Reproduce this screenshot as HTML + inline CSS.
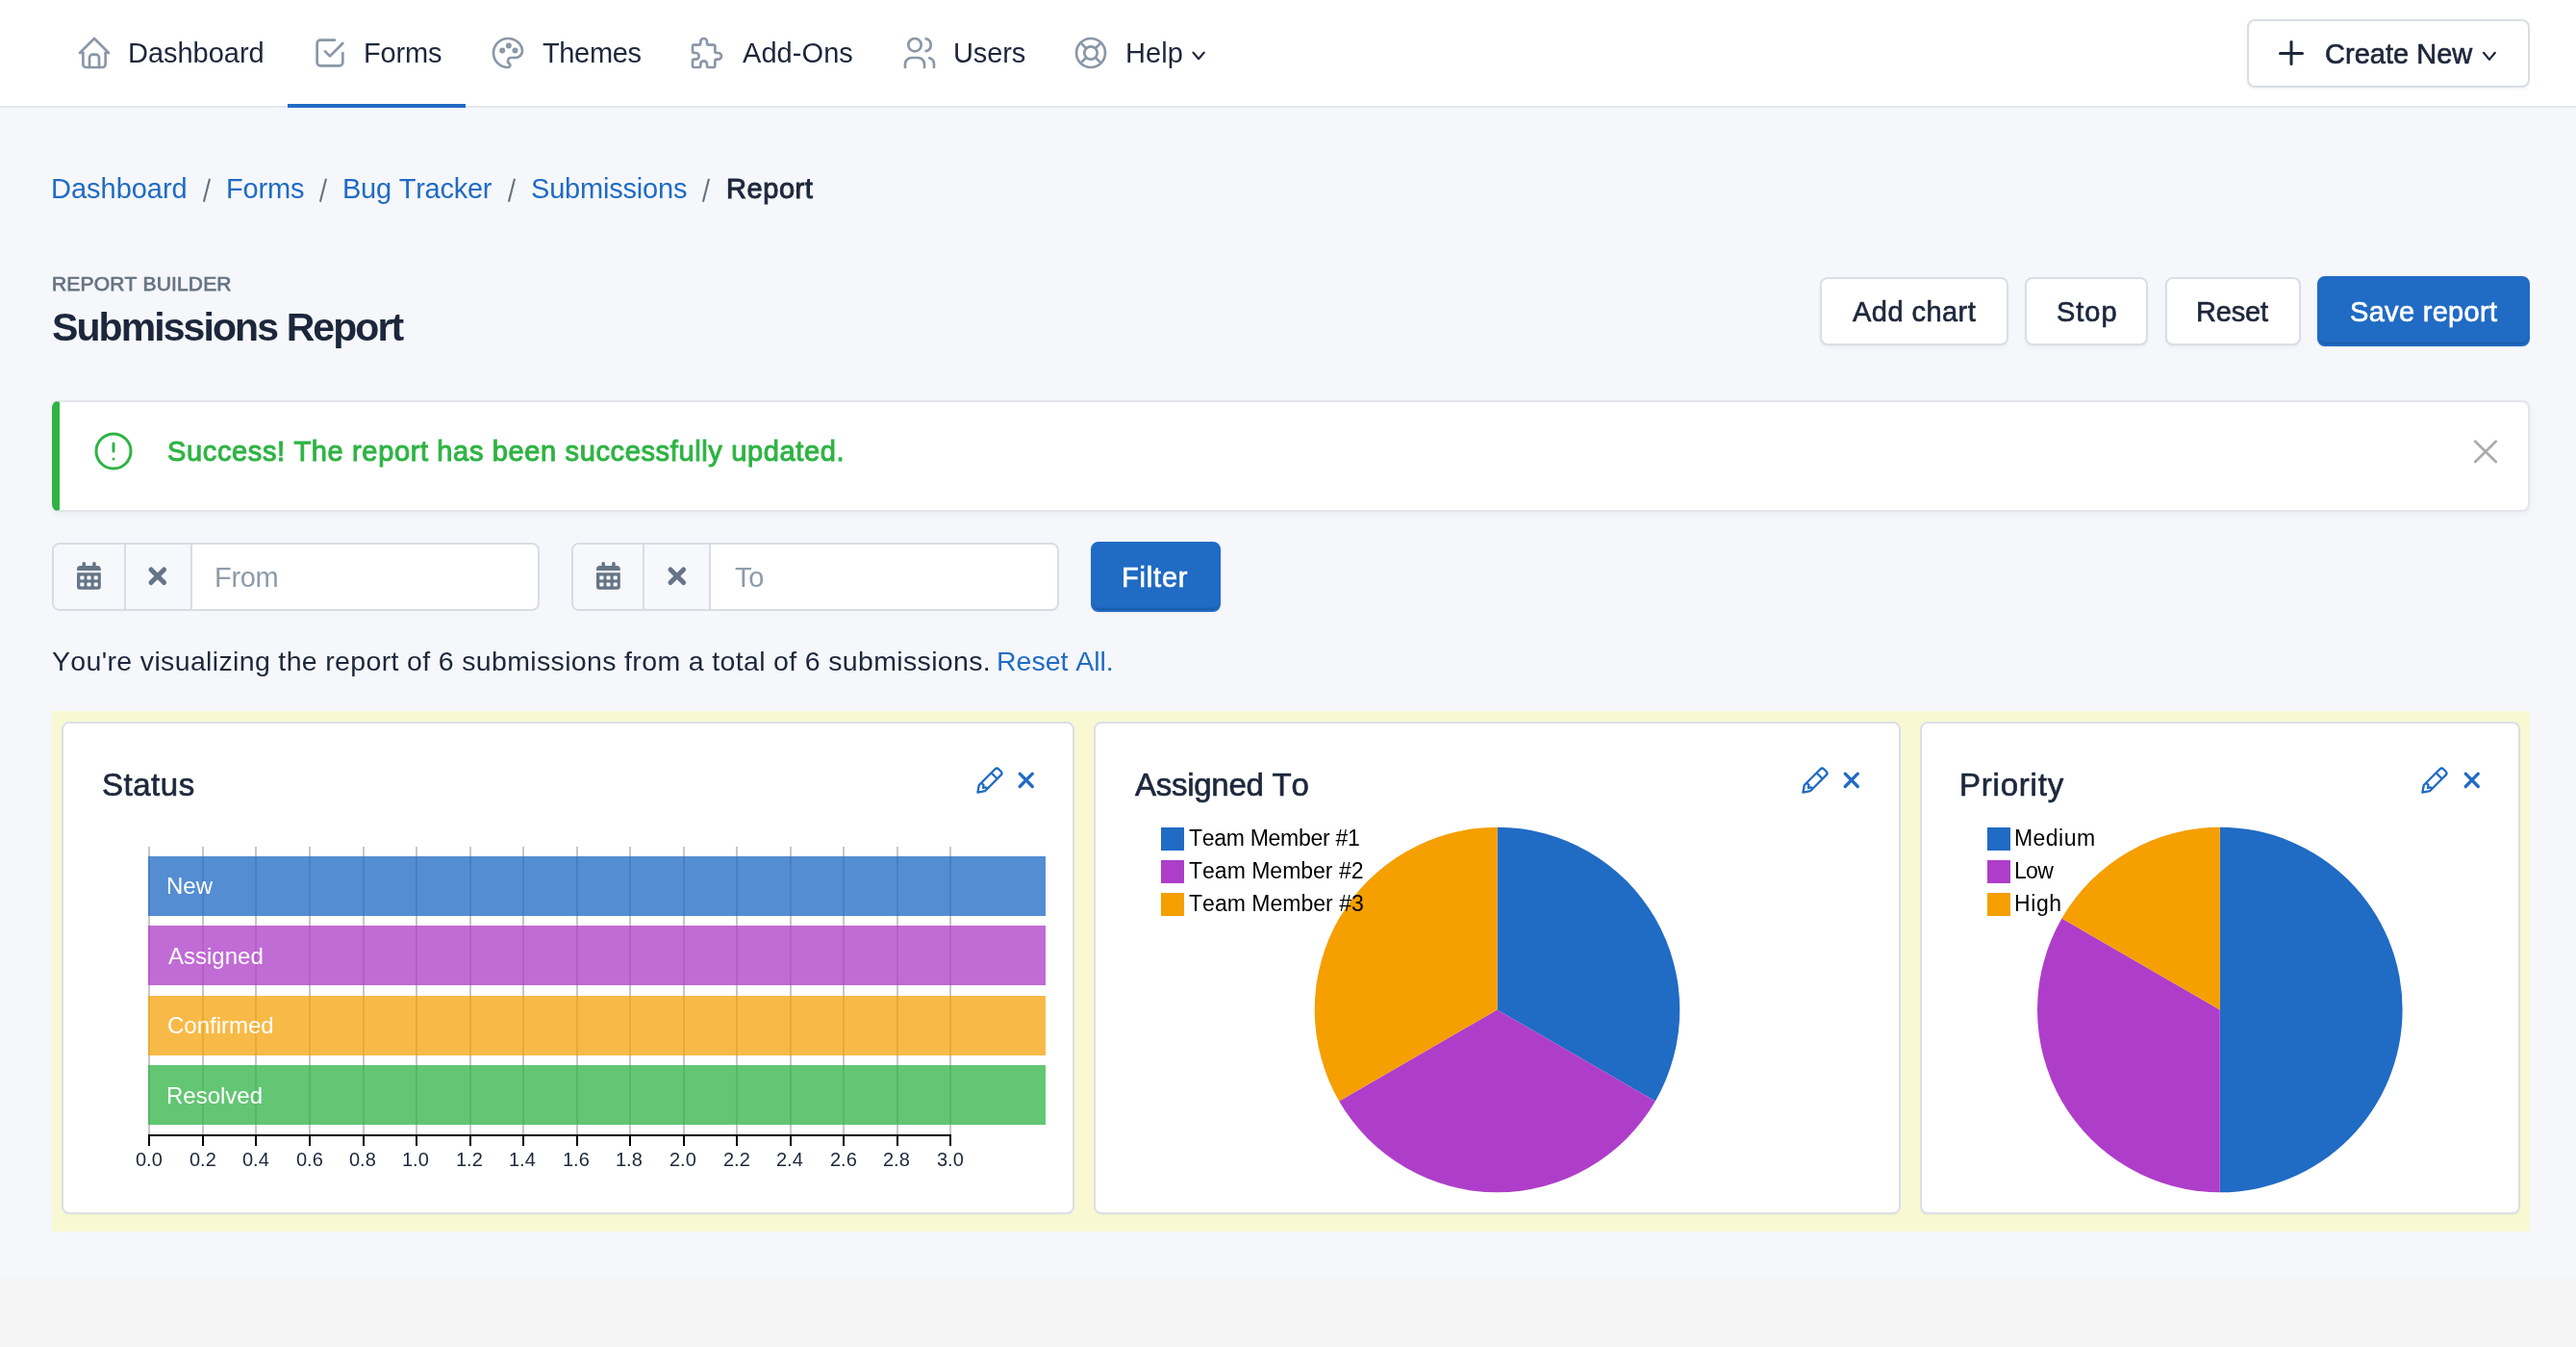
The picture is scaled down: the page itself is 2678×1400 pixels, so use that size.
<!DOCTYPE html>
<html><head><meta charset="utf-8"><title>Submissions Report</title>
<style>
html,body{margin:0;padding:0}
body{width:2678px;height:1400px;position:relative;overflow:hidden;background:#f4f5f4;font-family:"Liberation Sans",sans-serif;font-kerning:none}
.t{position:absolute;white-space:pre;line-height:60px;will-change:transform}
svg{overflow:visible}
@media (max-width:2000px){body{zoom:0.5}}
</style></head><body>
<div style="position:absolute;left:0px;top:0px;width:2678px;height:1329px;background:#f5f7fb"></div>
<div style="position:absolute;left:0px;top:0px;width:2678px;height:110px;background:#fff"></div>
<div style="position:absolute;left:0px;top:110px;width:2678px;height:2px;background:#e3e6ea"></div>
<div style="position:absolute;left:299px;top:108px;width:185px;height:4px;background:#206bc4"></div>
<svg style="position:absolute;left:78px;top:35px;" width="40" height="40" viewBox="0 0 24 24"><g fill="none" stroke="#8a97a7" stroke-width="1.6" stroke-linecap="round" stroke-linejoin="round"><path d="M5 12l-2 0l9 -9l9 9l-2 0"/><path d="M5 12v7a2 2 0 0 0 2 2h10a2 2 0 0 0 2 -2v-7"/><path d="M9 21v-6a2 2 0 0 1 2 -2h2a2 2 0 0 1 2 2v6"/></g></svg>
<svg style="position:absolute;left:323px;top:35px;" width="40" height="40" viewBox="0 0 24 24"><g fill="none" stroke="#8a97a7" stroke-width="1.6" stroke-linecap="round" stroke-linejoin="round"><path d="M9 11l3 3l8 -8"/><path d="M20 12v6a2 2 0 0 1 -2 2h-12a2 2 0 0 1 -2 -2v-12a2 2 0 0 1 2 -2h9"/></g></svg>
<svg style="position:absolute;left:508px;top:35px;" width="40" height="40" viewBox="0 0 24 24"><g fill="none" stroke="#8a97a7" stroke-width="1.6" stroke-linecap="round" stroke-linejoin="round"><path d="M12 21a9 9 0 0 1 0 -18c4.97 0 9 3.582 9 8c0 1.06 -.474 2.078 -1.318 2.828c-.844 .75 -1.989 1.172 -3.182 1.172h-2.5a2 2 0 0 0 -1 3.75a1.3 1.3 0 0 1 -1 2.25"/><path d="M8.5 10.5m-1 0a1 1 0 1 0 2 0a1 1 0 1 0 -2 0"/><path d="M12.5 7.5m-1 0a1 1 0 1 0 2 0a1 1 0 1 0 -2 0"/><path d="M16.5 10.5m-1 0a1 1 0 1 0 2 0a1 1 0 1 0 -2 0"/></g></svg>
<svg style="position:absolute;left:715px;top:35px;" width="40" height="40" viewBox="0 0 24 24"><g fill="none" stroke="#8a97a7" stroke-width="1.6" stroke-linecap="round" stroke-linejoin="round"><path d="M4 7h3a1 1 0 0 0 1 -1v-1a2 2 0 0 1 4 0v1a1 1 0 0 0 1 1h3a1 1 0 0 1 1 1v3a1 1 0 0 0 1 1h1a2 2 0 0 1 0 4h-1a1 1 0 0 0 -1 1v3a1 1 0 0 1 -1 1h-3a1 1 0 0 1 -1 -1v-1a2 2 0 0 0 -4 0v1a1 1 0 0 1 -1 1h-3a1 1 0 0 1 -1 -1v-3a1 1 0 0 1 1 -1h1a2 2 0 0 0 0 -4h-1a1 1 0 0 1 -1 -1v-3a1 1 0 0 1 1 -1"/></g></svg>
<svg style="position:absolute;left:936px;top:35px;" width="40" height="40" viewBox="0 0 24 24"><g fill="none" stroke="#8a97a7" stroke-width="1.6" stroke-linecap="round" stroke-linejoin="round"><path d="M9 7m-4 0a4 4 0 1 0 8 0a4 4 0 1 0 -8 0"/><path d="M3 21v-2a4 4 0 0 1 4 -4h4a4 4 0 0 1 4 4v2"/><path d="M16 3.13a4 4 0 0 1 0 7.75"/><path d="M21 21v-2a4 4 0 0 0 -3 -3.85"/></g></svg>
<svg style="position:absolute;left:1114px;top:35px;" width="40" height="40" viewBox="0 0 24 24"><g fill="none" stroke="#8a97a7" stroke-width="1.6" stroke-linecap="round" stroke-linejoin="round"><path d="M12 12m-4 0a4 4 0 1 0 8 0a4 4 0 1 0 -8 0"/><path d="M12 12m-9 0a9 9 0 1 0 18 0a9 9 0 1 0 -18 0"/><path d="M15 15l3.35 3.35"/><path d="M9 15l-3.35 3.35"/><path d="M5.65 5.65l3.35 3.35"/><path d="M18.35 5.65l-3.35 3.35"/></g></svg>
<div class="t" style="left:133.22px;top:25.45px;font-size:29px;color:#1d273b;letter-spacing:-0.028px;">Dashboard</div>
<div class="t" style="left:378.22px;top:25.45px;font-size:29px;color:#1d273b;letter-spacing:-0.158px;">Forms</div>
<div class="t" style="left:564.35px;top:25.45px;font-size:29px;color:#1d273b;letter-spacing:-0.362px;">Themes</div>
<div class="t" style="left:772.44px;top:25.45px;font-size:29px;color:#1d273b;letter-spacing:0.069px;">Add-Ons</div>
<div class="t" style="left:990.76px;top:25.45px;font-size:29px;color:#1d273b;letter-spacing:-0.111px;">Users</div>
<div class="t" style="left:1170.12px;top:25.45px;font-size:29px;color:#1d273b;letter-spacing:0.068px;">Help</div>
<svg style="position:absolute;left:1230px;top:45px;" width="30" height="25" viewBox="0 0 30 25"><polyline points="10.5,9.6 16.1,16.2 21.7,9.6" fill="none" stroke="#1d273b" stroke-width="2.2" stroke-linecap="round" stroke-linejoin="round"/></svg>
<div style="position:absolute;left:2336px;top:20px;width:294px;height:71px;box-sizing:border-box;background:#fff;border:2px solid #d9dee4;border-radius:8px;box-shadow:0 2px 3px rgba(29,39,59,0.05)"></div>
<svg style="position:absolute;left:2362px;top:35px;" width="40" height="40" viewBox="0 0 40 40"><g fill="none" stroke="#1d273b" stroke-width="3" stroke-linecap="round"><path d="M20 8.5v23"/><path d="M8.5 20.4h23"/></g></svg>
<div class="t" style="left:2417.28px;top:25.55px;font-size:29px;color:#1d273b;letter-spacing:0.021px;-webkit-text-stroke:0.65px currentColor;">Create New</div>
<svg style="position:absolute;left:2570px;top:45px;" width="30" height="25" viewBox="0 0 30 25"><polyline points="12,9.8 17.9,16.9 23.8,9.8" fill="none" stroke="#1d273b" stroke-width="2.2" stroke-linecap="round" stroke-linejoin="round"/></svg>
<div class="t" style="left:52.87px;top:165.55px;font-size:29px;color:#206bc4;letter-spacing:-0.015px;">Dashboard</div>
<svg style="position:absolute;left:209.25px;top:183px;" width="12" height="30" viewBox="0 0 12 30"><path d="M9.00 2.8L2.90 26.8" stroke="#66727f" stroke-width="2.1" stroke-linecap="butt"/></svg>
<div class="t" style="left:234.52px;top:165.55px;font-size:29px;color:#206bc4;letter-spacing:-0.158px;">Forms</div>
<svg style="position:absolute;left:330.0px;top:183px;" width="12" height="30" viewBox="0 0 12 30"><path d="M9.00 2.8L2.90 26.8" stroke="#66727f" stroke-width="2.1" stroke-linecap="butt"/></svg>
<div class="t" style="left:355.62px;top:165.55px;font-size:29px;color:#206bc4;letter-spacing:-0.248px;">Bug Tracker</div>
<svg style="position:absolute;left:525.5px;top:183px;" width="12" height="30" viewBox="0 0 12 30"><path d="M9.00 2.8L2.90 26.8" stroke="#66727f" stroke-width="2.1" stroke-linecap="butt"/></svg>
<div class="t" style="left:551.68px;top:165.55px;font-size:29px;color:#206bc4;letter-spacing:-0.193px;">Submissions</div>
<svg style="position:absolute;left:728.0px;top:183px;" width="12" height="30" viewBox="0 0 12 30"><path d="M9.00 2.8L2.90 26.8" stroke="#66727f" stroke-width="2.1" stroke-linecap="butt"/></svg>
<div class="t" style="left:754.92px;top:165.55px;font-size:29px;color:#1d273b;letter-spacing:0.570px;-webkit-text-stroke:1px currentColor;">Report</div>
<div class="t" style="left:54.18px;top:265.42px;font-size:21px;color:#667382;letter-spacing:0.164px;-webkit-text-stroke:0.75px currentColor;">REPORT BUILDER</div>
<div class="t" style="left:54.32px;top:310.29px;font-size:41px;color:#1d273b;font-weight:700;letter-spacing:-1.911px;">Submissions Report</div>
<div style="position:absolute;left:1892px;top:288px;width:196px;height:71px;box-sizing:border-box;background:#fff;border:2px solid #d9dee4;border-radius:8px;box-shadow:0 2px 3px rgba(29,39,59,0.05)"></div>
<div style="position:absolute;left:2105px;top:288px;width:128px;height:71px;box-sizing:border-box;background:#fff;border:2px solid #d9dee4;border-radius:8px;box-shadow:0 2px 3px rgba(29,39,59,0.05)"></div>
<div style="position:absolute;left:2251px;top:288px;width:141px;height:71px;box-sizing:border-box;background:#fff;border:2px solid #d9dee4;border-radius:8px;box-shadow:0 2px 3px rgba(29,39,59,0.05)"></div>
<div style="position:absolute;left:2409px;top:287px;width:221px;height:72.5px;box-sizing:border-box;background:#206bc4;border:2px solid #206bc4;border-radius:8px;box-shadow:inset 0 -3px 2px -1px rgba(0,0,0,0.14),0 1px 2px rgba(29,39,59,0.06)"></div>
<div class="t" style="left:1925.54px;top:293.70px;font-size:29px;color:#1d273b;letter-spacing:0.455px;-webkit-text-stroke:0.65px currentColor;">Add chart</div>
<div class="t" style="left:2138.08px;top:293.70px;font-size:29px;color:#1d273b;letter-spacing:0.959px;-webkit-text-stroke:0.65px currentColor;">Stop</div>
<div class="t" style="left:2283.22px;top:293.70px;font-size:29px;color:#1d273b;letter-spacing:-0.166px;-webkit-text-stroke:0.65px currentColor;">Reset</div>
<div class="t" style="left:2442.68px;top:293.70px;font-size:29px;color:#fff;letter-spacing:0.302px;-webkit-text-stroke:0.65px currentColor;">Save report</div>
<div style="position:absolute;left:54px;top:416px;width:2576px;height:116px;box-sizing:border-box;background:#fff;border:2px solid #e2e5e9;border-left:8px solid #2fb344;border-radius:8px;box-shadow:0 2px 6px rgba(29,39,59,0.05)"></div>
<svg style="position:absolute;left:94px;top:445px;" width="48" height="48" viewBox="0 0 24 24"><g fill="none" stroke="#2fb344" stroke-width="1.5" stroke-linecap="round"><circle cx="12" cy="12" r="9"/><path d="M12 8v4"/><path d="M12 16h.01"/></g></svg>
<div class="t" style="left:174.08px;top:439.35px;font-size:29px;color:#2fb344;letter-spacing:0.640px;-webkit-text-stroke:1px currentColor;">Success! The report has been successfully updated.</div>
<svg style="position:absolute;left:2566px;top:452px;" width="36" height="36" viewBox="0 0 36 36"><g stroke="#ababab" stroke-width="2.7" stroke-linecap="round"><path d="M7.2 6.7L28.8 28"/><path d="M28.8 6.7L7.2 28"/></g></svg>
<div style="position:absolute;left:54px;top:564px;width:507px;height:71px;box-sizing:border-box;background:#fff;border:2px solid #d8dde3;border-radius:8px;overflow:hidden"></div>
<div style="position:absolute;left:56px;top:566px;width:142px;height:67px;background:#f6f8fb;border-radius:6px 0 0 6px"></div>
<div style="position:absolute;left:129px;top:566px;width:2px;height:67px;background:#d8dde3"></div>
<div style="position:absolute;left:198px;top:566px;width:2px;height:67px;background:#d8dde3"></div>
<svg style="position:absolute;left:79.75px;top:584.4px;" width="25" height="29" viewBox="0 0 25 29"><g fill="#667587"><rect x="5.5" y="0" width="3.5" height="6" rx="1.5"/><rect x="16.2" y="0" width="3.5" height="6" rx="1.5"/><path d="M0 7.5a3.5 3.5 0 0 1 3.5 -3.5h17.8a3.5 3.5 0 0 1 3.5 3.5v1.6h-24.8z"/><path d="M0 11.2h24.8v14.6a3 3 0 0 1 -3 3h-18.8a3 3 0 0 1 -3 -3z"/></g><g fill="#f6f8fb"><rect x="3.3" y="14.6" width="4.2" height="3.8" rx="1"/><rect x="3.3" y="21.6" width="4.2" height="3.8" rx="1"/><rect x="10.4" y="14.6" width="4.2" height="3.8" rx="1"/><rect x="10.4" y="21.6" width="4.2" height="3.8" rx="1"/><rect x="17.6" y="14.6" width="4.2" height="3.8" rx="1"/><rect x="17.6" y="21.6" width="4.2" height="3.8" rx="1"/></g></svg>
<svg style="position:absolute;left:154.20000000000002px;top:589px;" width="20" height="20" viewBox="0 0 20 20"><g stroke="#667587" stroke-width="5" stroke-linecap="round"><path d="M3 3L16.6 16.6"/><path d="M16.6 3L3 16.6"/></g></svg>
<div class="t" style="left:223.22px;top:569.55px;font-size:29px;color:#8f9bab;letter-spacing:-0.322px;">From</div>
<div style="position:absolute;left:594px;top:564px;width:507px;height:71px;box-sizing:border-box;background:#fff;border:2px solid #d8dde3;border-radius:8px;overflow:hidden"></div>
<div style="position:absolute;left:596px;top:566px;width:141px;height:67px;background:#f6f8fb;border-radius:6px 0 0 6px"></div>
<div style="position:absolute;left:668px;top:566px;width:2px;height:67px;background:#d8dde3"></div>
<div style="position:absolute;left:737px;top:566px;width:2px;height:67px;background:#d8dde3"></div>
<svg style="position:absolute;left:619.75px;top:584.4px;" width="25" height="29" viewBox="0 0 25 29"><g fill="#667587"><rect x="5.5" y="0" width="3.5" height="6" rx="1.5"/><rect x="16.2" y="0" width="3.5" height="6" rx="1.5"/><path d="M0 7.5a3.5 3.5 0 0 1 3.5 -3.5h17.8a3.5 3.5 0 0 1 3.5 3.5v1.6h-24.8z"/><path d="M0 11.2h24.8v14.6a3 3 0 0 1 -3 3h-18.8a3 3 0 0 1 -3 -3z"/></g><g fill="#f6f8fb"><rect x="3.3" y="14.6" width="4.2" height="3.8" rx="1"/><rect x="3.3" y="21.6" width="4.2" height="3.8" rx="1"/><rect x="10.4" y="14.6" width="4.2" height="3.8" rx="1"/><rect x="10.4" y="21.6" width="4.2" height="3.8" rx="1"/><rect x="17.6" y="14.6" width="4.2" height="3.8" rx="1"/><rect x="17.6" y="21.6" width="4.2" height="3.8" rx="1"/></g></svg>
<svg style="position:absolute;left:694.1999999999999px;top:589px;" width="20" height="20" viewBox="0 0 20 20"><g stroke="#667587" stroke-width="5" stroke-linecap="round"><path d="M3 3L16.6 16.6"/><path d="M16.6 3L3 16.6"/></g></svg>
<div class="t" style="left:763.75px;top:569.55px;font-size:29px;color:#8f9bab;letter-spacing:-3.374px;">To</div>
<div style="position:absolute;left:1134px;top:563px;width:135px;height:72.5px;box-sizing:border-box;background:#206bc4;border:2px solid #206bc4;border-radius:8px;box-shadow:inset 0 -3px 2px -1px rgba(0,0,0,0.14),0 1px 2px rgba(29,39,59,0.06)"></div>
<div class="t" style="left:1166.37px;top:569.95px;font-size:29px;color:#fff;letter-spacing:0.813px;-webkit-text-stroke:0.65px currentColor;">Filter</div>
<div class="t" style="left:54.37px;top:657.37px;font-size:28.5px;color:#1d273b;letter-spacing:0.345px;">You're visualizing the report of 6 submissions from a total of 6 submissions.</div>
<div class="t" style="left:1036.41px;top:657.37px;font-size:28.5px;color:#206bc4;letter-spacing:-0.019px;">Reset All.</div>
<div style="position:absolute;left:54px;top:739px;width:2576px;height:541px;background:#f8f9d3"></div>
<div style="position:absolute;left:64px;top:750px;width:1053px;height:512px;box-sizing:border-box;background:#fff;border:2px solid #dcdfe5;border-radius:8px;box-shadow:0 1px 2px rgba(29,39,59,0.04)"></div>
<div style="position:absolute;left:1137px;top:750px;width:839px;height:512px;box-sizing:border-box;background:#fff;border:2px solid #dcdfe5;border-radius:8px;box-shadow:0 1px 2px rgba(29,39,59,0.04)"></div>
<div style="position:absolute;left:1996px;top:750px;width:624px;height:512px;box-sizing:border-box;background:#fff;border:2px solid #dcdfe5;border-radius:8px;box-shadow:0 1px 2px rgba(29,39,59,0.04)"></div>
<div class="t" style="left:106.00px;top:786.36px;font-size:33px;color:#1d273b;letter-spacing:0.527px;-webkit-text-stroke:0.65px currentColor;">Status</div>
<div class="t" style="left:1179.94px;top:785.96px;font-size:33px;color:#1d273b;letter-spacing:-0.268px;-webkit-text-stroke:0.65px currentColor;">Assigned To</div>
<div class="t" style="left:2036.79px;top:786.06px;font-size:33px;color:#1d273b;letter-spacing:0.785px;-webkit-text-stroke:0.65px currentColor;">Priority</div>
<svg style="position:absolute;left:1013.5999999999999px;top:797.8px;" width="28" height="28" viewBox="0 0 28 28"><g transform="translate(1.8 26.2) rotate(-45)" fill="none" stroke="#206bc4" stroke-width="2.3" stroke-linejoin="round"><path d="M0.9 0 L7.2 -4.4 H30.6 Q33.4 -4.4 33.4 -1.6 V1.6 Q33.4 4.4 30.6 4.4 H7.2 Z"/><path d="M25.2 -4.4V4.4"/><path d="M10.6 -4.4V-1.2L8.2 0.6L10.6 2.4V4.4"/></g></svg>
<svg style="position:absolute;left:1057.9px;top:802px;" width="17.5" height="17.8" viewBox="0 0 17.5 17.8"><g stroke="#206bc4" stroke-width="3.3" stroke-linecap="round"><path d="M2.2 2.2L15.3 15.5"/><path d="M15.3 2.2L2.2 15.5"/></g></svg>
<svg style="position:absolute;left:1871.8999999999999px;top:797.8px;" width="28" height="28" viewBox="0 0 28 28"><g transform="translate(1.8 26.2) rotate(-45)" fill="none" stroke="#206bc4" stroke-width="2.3" stroke-linejoin="round"><path d="M0.9 0 L7.2 -4.4 H30.6 Q33.4 -4.4 33.4 -1.6 V1.6 Q33.4 4.4 30.6 4.4 H7.2 Z"/><path d="M25.2 -4.4V4.4"/><path d="M10.6 -4.4V-1.2L8.2 0.6L10.6 2.4V4.4"/></g></svg>
<svg style="position:absolute;left:1915.9px;top:802px;" width="17.5" height="17.8" viewBox="0 0 17.5 17.8"><g stroke="#206bc4" stroke-width="3.3" stroke-linecap="round"><path d="M2.2 2.2L15.3 15.5"/><path d="M15.3 2.2L2.2 15.5"/></g></svg>
<svg style="position:absolute;left:2516.3px;top:797.8px;" width="28" height="28" viewBox="0 0 28 28"><g transform="translate(1.8 26.2) rotate(-45)" fill="none" stroke="#206bc4" stroke-width="2.3" stroke-linejoin="round"><path d="M0.9 0 L7.2 -4.4 H30.6 Q33.4 -4.4 33.4 -1.6 V1.6 Q33.4 4.4 30.6 4.4 H7.2 Z"/><path d="M25.2 -4.4V4.4"/><path d="M10.6 -4.4V-1.2L8.2 0.6L10.6 2.4V4.4"/></g></svg>
<svg style="position:absolute;left:2560.5px;top:802px;" width="17.5" height="17.8" viewBox="0 0 17.5 17.8"><g stroke="#206bc4" stroke-width="3.3" stroke-linecap="round"><path d="M2.2 2.2L15.3 15.5"/><path d="M15.3 2.2L2.2 15.5"/></g></svg>
<div style="position:absolute;left:154.4px;top:879.5px;width:2px;height:300.5px;background:rgba(0,0,0,0.22)"></div>
<div style="position:absolute;left:154.4px;top:1180px;width:2px;height:11px;background:#000"></div>
<div class="t" style="left:141.00px;top:1174.97px;font-size:20px;color:#1d273b;">0.0</div>
<div style="position:absolute;left:209.93px;top:879.5px;width:2px;height:300.5px;background:rgba(0,0,0,0.22)"></div>
<div style="position:absolute;left:209.93px;top:1180px;width:2px;height:11px;background:#000"></div>
<div class="t" style="left:196.64px;top:1174.97px;font-size:20px;color:#1d273b;">0.2</div>
<div style="position:absolute;left:265.47px;top:879.5px;width:2px;height:300.5px;background:rgba(0,0,0,0.22)"></div>
<div style="position:absolute;left:265.47px;top:1180px;width:2px;height:11px;background:#000"></div>
<div class="t" style="left:251.97px;top:1174.97px;font-size:20px;color:#1d273b;">0.4</div>
<div style="position:absolute;left:321.0px;top:879.5px;width:2px;height:300.5px;background:rgba(0,0,0,0.22)"></div>
<div style="position:absolute;left:321.0px;top:1180px;width:2px;height:11px;background:#000"></div>
<div class="t" style="left:307.65px;top:1174.97px;font-size:20px;color:#1d273b;">0.6</div>
<div style="position:absolute;left:376.53px;top:879.5px;width:2px;height:300.5px;background:rgba(0,0,0,0.22)"></div>
<div style="position:absolute;left:376.53px;top:1180px;width:2px;height:11px;background:#000"></div>
<div class="t" style="left:363.17px;top:1174.97px;font-size:20px;color:#1d273b;">0.8</div>
<div style="position:absolute;left:432.07px;top:879.5px;width:2px;height:300.5px;background:rgba(0,0,0,0.22)"></div>
<div style="position:absolute;left:432.07px;top:1180px;width:2px;height:11px;background:#000"></div>
<div class="t" style="left:418.29px;top:1174.97px;font-size:20px;color:#1d273b;">1.0</div>
<div style="position:absolute;left:487.6px;top:879.5px;width:2px;height:300.5px;background:rgba(0,0,0,0.22)"></div>
<div style="position:absolute;left:487.6px;top:1180px;width:2px;height:11px;background:#000"></div>
<div class="t" style="left:473.94px;top:1174.97px;font-size:20px;color:#1d273b;">1.2</div>
<div style="position:absolute;left:543.13px;top:879.5px;width:2px;height:300.5px;background:rgba(0,0,0,0.22)"></div>
<div style="position:absolute;left:543.13px;top:1180px;width:2px;height:11px;background:#000"></div>
<div class="t" style="left:529.26px;top:1174.97px;font-size:20px;color:#1d273b;">1.4</div>
<div style="position:absolute;left:598.66px;top:879.5px;width:2px;height:300.5px;background:rgba(0,0,0,0.22)"></div>
<div style="position:absolute;left:598.66px;top:1180px;width:2px;height:11px;background:#000"></div>
<div class="t" style="left:584.94px;top:1174.97px;font-size:20px;color:#1d273b;">1.6</div>
<div style="position:absolute;left:654.2px;top:879.5px;width:2px;height:300.5px;background:rgba(0,0,0,0.22)"></div>
<div style="position:absolute;left:654.2px;top:1180px;width:2px;height:11px;background:#000"></div>
<div class="t" style="left:640.47px;top:1174.97px;font-size:20px;color:#1d273b;">1.8</div>
<div style="position:absolute;left:709.73px;top:879.5px;width:2px;height:300.5px;background:rgba(0,0,0,0.22)"></div>
<div style="position:absolute;left:709.73px;top:1180px;width:2px;height:11px;background:#000"></div>
<div class="t" style="left:696.22px;top:1174.97px;font-size:20px;color:#1d273b;">2.0</div>
<div style="position:absolute;left:765.26px;top:879.5px;width:2px;height:300.5px;background:rgba(0,0,0,0.22)"></div>
<div style="position:absolute;left:765.26px;top:1180px;width:2px;height:11px;background:#000"></div>
<div class="t" style="left:751.86px;top:1174.97px;font-size:20px;color:#1d273b;">2.2</div>
<div style="position:absolute;left:820.8px;top:879.5px;width:2px;height:300.5px;background:rgba(0,0,0,0.22)"></div>
<div style="position:absolute;left:820.8px;top:1180px;width:2px;height:11px;background:#000"></div>
<div class="t" style="left:807.18px;top:1174.97px;font-size:20px;color:#1d273b;">2.4</div>
<div style="position:absolute;left:876.33px;top:879.5px;width:2px;height:300.5px;background:rgba(0,0,0,0.22)"></div>
<div style="position:absolute;left:876.33px;top:1180px;width:2px;height:11px;background:#000"></div>
<div class="t" style="left:862.86px;top:1174.97px;font-size:20px;color:#1d273b;">2.6</div>
<div style="position:absolute;left:931.86px;top:879.5px;width:2px;height:300.5px;background:rgba(0,0,0,0.22)"></div>
<div style="position:absolute;left:931.86px;top:1180px;width:2px;height:11px;background:#000"></div>
<div class="t" style="left:918.39px;top:1174.97px;font-size:20px;color:#1d273b;">2.8</div>
<div style="position:absolute;left:987.39px;top:879.5px;width:2px;height:300.5px;background:rgba(0,0,0,0.22)"></div>
<div style="position:absolute;left:987.39px;top:1180px;width:2px;height:11px;background:#000"></div>
<div class="t" style="left:974.00px;top:1174.97px;font-size:20px;color:#1d273b;">3.0</div>
<div style="position:absolute;left:154px;top:890px;width:933px;height:62px;background:rgba(32,107,196,0.77)"></div>
<div style="position:absolute;left:154px;top:962px;width:933px;height:62px;background:rgba(174,62,201,0.77)"></div>
<div style="position:absolute;left:154px;top:1034.5px;width:933px;height:62px;background:rgba(245,159,0,0.72)"></div>
<div style="position:absolute;left:154px;top:1107px;width:933px;height:62px;background:rgba(47,179,68,0.75)"></div>
<div style="position:absolute;left:154px;top:1179px;width:834.895px;height:2px;background:#000"></div>
<div class="t" style="left:173.23px;top:891.28px;font-size:24px;color:#fff;">New</div>
<div class="t" style="left:175.15px;top:963.78px;font-size:24px;color:#fff;">Assigned</div>
<div class="t" style="left:173.98px;top:1036.28px;font-size:24px;color:#fff;">Confirmed</div>
<div class="t" style="left:173.23px;top:1108.78px;font-size:24px;color:#fff;">Resolved</div>
<svg style="position:absolute;left:0px;top:0px;pointer-events:none" width="2678" height="1400" viewBox="0 0 2678 1400"><path d="M1556.5 1049.5L1556.50 859.70A189.8 189.8 0 0 1 1720.87 1144.40Z" fill="#206bc4"/><path d="M1556.5 1049.5L1720.87 1144.40A189.8 189.8 0 0 1 1392.13 1144.40Z" fill="#ae3ec9"/><path d="M1556.5 1049.5L1392.13 1144.40A189.8 189.8 0 0 1 1556.50 859.70Z" fill="#f59f00"/></svg>
<svg style="position:absolute;left:0px;top:0px;pointer-events:none" width="2678" height="1400" viewBox="0 0 2678 1400"><path d="M2307.8 1049.5L2307.80 859.70A189.8 189.8 0 0 1 2307.80 1239.30Z" fill="#206bc4"/><path d="M2307.8 1049.5L2307.80 1239.30A189.8 189.8 0 0 1 2143.43 954.60Z" fill="#ae3ec9"/><path d="M2307.8 1049.5L2143.43 954.60A189.8 189.8 0 0 1 2307.80 859.70Z" fill="#f59f00"/></svg>
<div style="position:absolute;left:1207px;top:859.5px;width:24px;height:24px;background:#206bc4"></div>
<div class="t" style="left:1235.58px;top:840.63px;font-size:23px;color:#000;letter-spacing:-0.290px;">Team Member #1</div>
<div style="position:absolute;left:1207px;top:893.5px;width:24px;height:24px;background:#ae3ec9"></div>
<div class="t" style="left:1235.58px;top:874.63px;font-size:23px;color:#000;">Team Member #2</div>
<div style="position:absolute;left:1207px;top:927.5px;width:24px;height:24px;background:#f59f00"></div>
<div class="t" style="left:1235.58px;top:908.63px;font-size:23px;color:#000;letter-spacing:0.025px;">Team Member #3</div>
<div style="position:absolute;left:2066px;top:859.5px;width:24px;height:24px;background:#206bc4"></div>
<div class="t" style="left:2093.71px;top:840.63px;font-size:23px;color:#000;letter-spacing:0.460px;">Medium</div>
<div style="position:absolute;left:2066px;top:893.5px;width:24px;height:24px;background:#ae3ec9"></div>
<div class="t" style="left:2093.71px;top:874.63px;font-size:23px;color:#000;letter-spacing:-0.681px;">Low</div>
<div style="position:absolute;left:2066px;top:927.5px;width:24px;height:24px;background:#f59f00"></div>
<div class="t" style="left:2093.71px;top:908.63px;font-size:23px;color:#000;letter-spacing:0.593px;">High</div>
</body></html>
